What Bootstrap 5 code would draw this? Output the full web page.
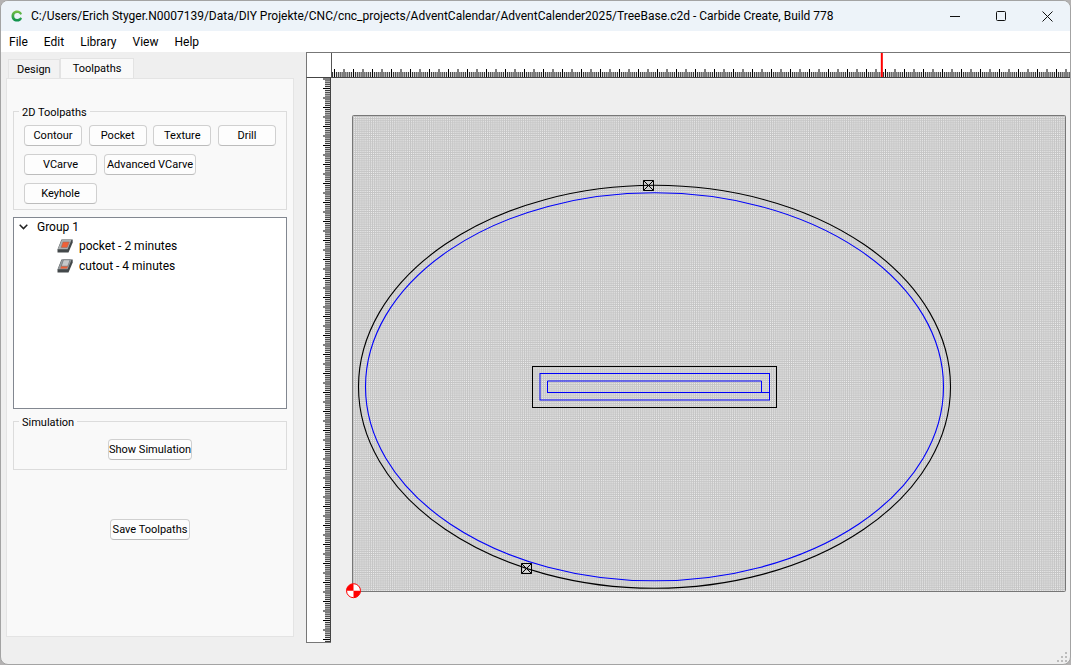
<!DOCTYPE html>
<html lang="en">
<head>
<meta charset="utf-8">
<meta name="viewport" content="width=device-width, initial-scale=1">
<title>TreeBase.c2d - Carbide Create</title>
<link href="https://cdn.jsdelivr.net/npm/bootstrap@5.3.0/dist/css/bootstrap.min.css" rel="stylesheet">
<style>
  body { font: 12px/20px Roboto, "Open Sans", sans-serif; color: #000; background: #b4b2b2; }
  .app-window { background: #efefef; border: 1px solid #a3a3a3; border-radius: 8px; overflow: hidden; }
  .title-bar { height: 30px; background: #edf3f9; padding-left: 10px; }
  .win-btn { width: 46px; height: 30px; padding: 0; border: 0; border-radius: 0; display: flex; align-items: center; justify-content: center; }
  .menu-bar { background: #fff; padding: 0 8px; gap: 16px; height: 21px; }
  .menu-bar a { color: #000; text-decoration: none; }

  .side-panel { width: 305px; padding: 6px 12px 27px 5px; font-size: 11px; line-height: 16px; }
  .tool-tabs { padding-left: 2px; }
  .tool-tabs .nav-link { border: 1px solid #e3e3e3; border-bottom: 0; border-radius: 0; color: #000; padding: 2px 8px; height: 19px; background: #f2f2f2; }
  .tool-tabs .nav-link.active { height: 21px; padding: 2px 12px; background: #f9f9f9; margin-bottom: -1px; color: #000; }
  .tool-pane { background: #f9f9f9; border: 1px solid #e4e4e4; padding: 32px 6px 0; }
  .group-frame { position: relative; border: 1px solid #dcdcdc; }
  .group-frame legend { position: absolute; top: -7px; left: 5px; width: auto; float: none; margin: 0; padding: 0 3px; font-size: 11px; line-height: 16px; background: #f9f9f9; }
  .tool-btn { height: 21px; padding: 0; font-size: 11px; line-height: 20px; color: #000; background: #fdfdfd; border: 1px solid #d0d0d0; border-bottom-color: #bcbcbc; border-radius: 4px; white-space: nowrap; }
  .w-s { width: 58px; } .w-m { width: 73px; } .w-l { width: 92px; }
  .tool-rows { padding: 13px 10px 5px; gap: 8px; }
  .tool-gap { gap: 7px; }
  .tree-view { height: 192px; margin-top: 7px; background: #fff; border: 1px solid #828790; font-size: 12px; line-height: 20px; }
  .tree-view svg { flex: none; }
  .group-row { gap: 9px; padding-left: 5px; height: 18px; }
  .child-rows { padding-left: 43px; }
  .child-rows li { gap: 6px; }
  .sim-frame { margin-top: 12px; padding: 17px 0 9px; }
  .sim-btn { width: 84px; display: block; margin: 0 auto; }
  .save-btn { width: 80px; margin-top: 49px; }

  .canvas-area { display: grid; grid-template-columns: 25px minmax(0, 1fr); grid-template-rows: 26px auto; align-content: start; padding-bottom: 21px; }
  .canvas-area svg { display: block; }
  .ruler-corner { background: #fff; border: 1px solid #777; border-right: 0; border-bottom-color: #444; }
  .ruler-top { background: #fff; border-top: 1px solid #777; }
  .ruler-left { background: #fff; border-left: 1px solid #777; border-bottom: 1px solid #777; position: relative; }
  .ruler-left svg { position: absolute; inset: 0; }
  .size-grip { position: absolute; right: 3px; bottom: 2px; }
</style>
</head>
<body>
<div class="app-window position-relative d-flex flex-column min-vh-100">
  <header class="title-bar d-flex align-items-center">
    <svg width="12" height="12" viewBox="0 0 12 12" aria-hidden="true"><defs><linearGradient id="lg" x1="0" y1="0" x2="0" y2="1"><stop offset="0" stop-color="#7cc142"/><stop offset="1" stop-color="#078f4e"/></linearGradient></defs><path d="M11 3.900L9.200 4.700C8.700 3.600 7.600 3 6.200 3C4.300 3 3.200 4.200 3.200 6S4.300 9 6.200 9C7.600 9 8.700 8.400 9.200 7.300L11 8.200C10.400 10.400 8.500 11.600 6.100 11.600C2.700 11.600.5 9.300.5 6S2.700.4 6.100.4C8.500.4 10.400 1.600 11 3.900Z" fill="url(#lg)"/></svg>
    <div class="ms-2 flex-grow-1 text-nowrap overflow-hidden">C:/Users/Erich Styger.N0007139/Data/DIY Projekte/CNC/cnc_projects/AdventCalendar/AdventCalender2025/TreeBase.c2d - Carbide Create, Build 778</div>
    <button class="btn win-btn" aria-label="Minimize"><svg width="11" height="11"><path d="M0 5.500h10" stroke="#111"/></svg></button>
    <button class="btn win-btn" aria-label="Maximize"><svg width="11" height="11"><rect x=".5" y=".5" width="9" height="9" rx="1" fill="none" stroke="#111"/></svg></button>
    <button class="btn win-btn" aria-label="Close"><svg width="11" height="11"><path d="M.5.5l10 10M10.500.5l-10 10" stroke="#111"/></svg></button>
  </header>
  <nav class="menu-bar d-flex align-items-center">
    <a href="#">File</a><a href="#">Edit</a><a href="#">Library</a><a href="#">View</a><a href="#">Help</a>
  </nav>
  <main class="d-flex flex-grow-1">
    <aside class="side-panel flex-shrink-0 d-flex flex-column">
      <div class="tool-tabs nav align-items-end" role="tablist">
        <button class="nav-link" role="tab" aria-selected="false">Design</button>
        <button class="nav-link active" role="tab" aria-selected="true">Toolpaths</button>
      </div>
      <div class="tool-pane flex-grow-1 d-flex flex-column">
        <fieldset class="group-frame">
          <legend>2D Toolpaths</legend>
          <div class="tool-rows d-flex flex-column">
            <div class="d-flex justify-content-between">
              <button class="btn tool-btn w-s">Contour</button>
              <button class="btn tool-btn w-s">Pocket</button>
              <button class="btn tool-btn w-s">Texture</button>
              <button class="btn tool-btn w-s">Drill</button>
            </div>
            <div class="d-flex tool-gap">
              <button class="btn tool-btn w-m">VCarve</button>
              <button class="btn tool-btn w-l">Advanced VCarve</button>
            </div>
            <div class="d-flex"><button class="btn tool-btn w-m">Keyhole</button></div>
          </div>
        </fieldset>
        <div class="tree-view">
          <ul class="list-unstyled mb-0">
            <li>
              <div class="d-flex align-items-center group-row"><svg width="9" height="6" aria-hidden="true"><path d="M.7.8l3.800 3.800L8.300.8" fill="none" stroke="#222" stroke-width="1.500"/></svg><span>Group 1</span></div>
              <ul class="list-unstyled child-rows">
                <li class="d-flex align-items-center">
                  <svg width="16" height="14" viewBox="0 0 16 14" aria-hidden="true"><path d="M4.500.5h11.200v3L11.500 13.500H.5v-3Z" fill="#43484a"/><path d="M4.800.7h9.700L10.600 10.300H.8Z" fill="#abb0b1"/><path d="M6 3h6.300L10.200 8.500H4.200Z" fill="#ef6037" stroke="#8d6a60" stroke-width=".5"/></svg>
                  <span>pocket - 2 minutes</span></li>
                <li class="d-flex align-items-center">
                  <svg width="16" height="14" viewBox="0 0 16 14" aria-hidden="true"><path d="M4.500.5h11.200v3L11.500 13.500H.5v-3Z" fill="#43484a"/><path d="M4.800.7h9.700L10.600 10.300H.8Z" fill="#979da0"/><path d="M4.600 6h6.800L10 9.500H3.400Z" fill="#ef6037"/><path d="M6.500.8h6.600L10.800 7.200H4.300Z" fill="#c5c8ca" stroke="#676c6f" stroke-width=".6"/></svg>
                  <span>cutout - 4 minutes</span></li>
              </ul>
            </li>
          </ul>
        </div>
        <fieldset class="group-frame sim-frame">
          <legend>Simulation</legend>
          <button class="btn tool-btn sim-btn">Show Simulation</button>
        </fieldset>
        <button class="btn tool-btn save-btn align-self-center">Save Toolpaths</button>
      </div>
    </aside>
    <section class="canvas-area flex-grow-1" aria-label="Design canvas">
      <div class="ruler-corner"></div>
      <div class="ruler-top">
        <svg width="100%" height="25" aria-hidden="true">
          <defs><pattern id="ticks-x" x="3" width="19" height="25" patternUnits="userSpaceOnUse">
            <path d="M.5 16v9M10 16v9" stroke="#000"/>
            <path d="M2.400 19v6M4.300 19v6M6.200 19v6M8.100 19v6M11.900 19v6M13.800 19v6M15.700 19v6M17.600 19v6" stroke="#222"/></pattern></defs>
          <rect width="100%" height="25" fill="url(#ticks-x)"/>
          <rect y="24" width="100%" height="1" fill="#444"/>
          <rect width="1" height="25" fill="#555"/>
          <rect x="74.400%" width="2" height="24" fill="#f00"/>
        </svg>
      </div>
      <div class="ruler-left">
        <svg width="24" height="100%" aria-hidden="true">
          <defs><pattern id="ticks-y" y="10" width="24" height="19" patternUnits="userSpaceOnUse">
            <path d="M16 .5h8M16 10h8" stroke="#000"/>
            <path d="M18 2.400h6M18 4.300h6M18 6.200h6M18 8.100h6M18 11.900h6M18 13.800h6M18 15.700h6M18 17.600h6" stroke="#222"/></pattern></defs>
          <rect width="24" height="100%" fill="url(#ticks-y)"/>
          <rect x="23" width="1" height="100%" fill="#444"/>
        </svg>
      </div>
      <svg class="w-100 h-auto" viewBox="331 78 739 565" role="img" aria-label="Toolpath drawing">
        <defs><pattern id="mesh" x="353" y="116" width="19" height="19" patternUnits="userSpaceOnUse">
          <rect width="19" height="19" fill="#f6f6f6"/>
          <path d="M.5 0v19M2.400 0v19M4.300 0v19M6.200 0v19M8.100 0v19M10 0v19M11.900 0v19M13.800 0v19M15.700 0v19M17.600 0v19M0 .5h19M0 2.400h19M0 4.300h19M0 6.200h19M0 8.100h19M0 10h19M0 11.900h19M0 13.800h19M0 15.700h19M0 17.600h19" stroke="#c5c5c5"/></pattern></defs>
        <rect x="352.500" y="115.500" width="713" height="476" rx="1" fill="url(#mesh)" stroke="#777"/>
        <g fill="none" stroke="#000">
          <ellipse cx="654.500" cy="386.800" rx="296" ry="201.500" stroke-width="1.100"/>
          <rect x="532.500" y="366.500" width="244" height="41"/>
          <path d="M643.500 180.500h10v10h-10zl10 10M653.500 180.500l-10 10"/>
          <path d="M521.500 563.500h10v10h-10zl10 10M531.500 563.500l-10 10"/>
        </g>
        <g fill="none" stroke="#0000fa">
          <ellipse cx="654.500" cy="386.800" rx="289" ry="194" stroke-width="1.100"/>
          <rect x="540" y="373.500" width="229.500" height="26.500"/>
          <path d="M547.500 392.500v-11.500h214v11.500M547 392.500h222"/>
        </g>
        <circle cx="353.500" cy="590.700" r="7" fill="#fff" stroke="#f00"/>
        <path d="M353.500 590.700v-7a7 7 0 0 0-7 7h14a7 7 0 0 1-7 7z" fill="#f00"/>
      </svg>
    </section>
  </main>
  <svg class="size-grip" width="10" height="10" aria-hidden="true"><path d="M8 0h2v2h-2zM8 4h2v2h-2zM8 8h2v2h-2zM4 4h2v2h-2zM4 8h2v2h-2zM0 8h2v2h-2z" fill="#bcbcbc"/></svg>
</div>
<script src="https://cdn.jsdelivr.net/npm/bootstrap@5.3.0/dist/js/bootstrap.bundle.min.js"></script>
</body>
</html>
